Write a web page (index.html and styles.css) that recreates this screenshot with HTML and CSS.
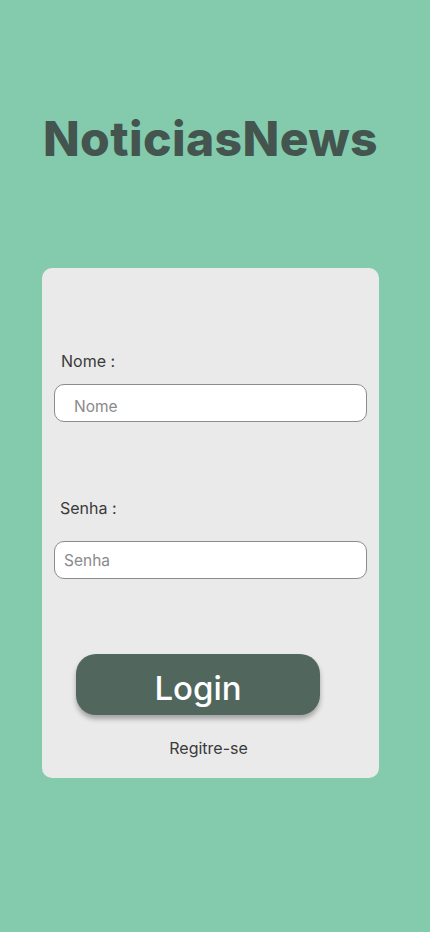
FILE: index.html
```html
<!DOCTYPE html>
<html lang="pt">
<head>
<meta charset="utf-8">
<link rel="stylesheet" href="styles.css">
</head>
<body>
<main class="page">
  <h1 class="title">NoticiasNews</h1>
  <form class="card">
    <label class="label label-nome">Nome :</label>
    <input class="field field-nome" type="text" placeholder="Nome">
    <label class="label label-senha">Senha :</label>
    <input class="field field-senha" type="password" placeholder="Senha">
    <button type="button" class="btn">Login</button>
    <a class="register">Regitre-se</a>
  </form>
</main>
</body>
</html>
```
FILE: styles.css
```css
* { box-sizing: border-box; }
html, body { margin: 0; padding: 0; }
body {
  background: #84cbad;
  font-family: Inter, "Noto Sans", sans-serif;
  width: 430px;
  height: 932px;
  overflow: hidden;
}
.page {
  display: flex;
  flex-direction: column;
  padding: 0 51px 0 42px;
}
.title {
  margin: 109px 0 0 0;
  font-family: Inter, sans-serif;
  font-weight: 800;
  font-size: 48px;
  line-height: 60px;
  letter-spacing: 0.4px;
  color: #43554e;
  text-align: center;
  white-space: nowrap;
}
.card {
  margin-top: 99px;
  width: 337px;
  height: 510px;
  background: #eaeaea;
  border-radius: 10px;
  display: flex;
  flex-direction: column;
  padding: 82px 12px 0 12px;
}
.label {
  font-size: 16px;
  line-height: 22px;
  color: #3a3a3a;
  padding-left: 7px;
}
.label-senha { margin-top: 75px; padding-left: 6px; }
.field {
  margin-top: 12px;
  height: 38px;
  width: 313px;
  border: 1px solid #8c8c8c;
  border-radius: 10px;
  background: #fff;
  font-family: Inter, sans-serif;
  font-size: 15.5px;
  color: #333;
  outline: none;
}
.field::placeholder { color: #8a8a8a; }
.field-nome { padding: 6px 0 0 19px; }
.field-senha { margin-top: 22px; padding: 0 0 0 9px; }
.btn {
  margin: 75px 0 0 22px;
  width: 244px;
  height: 61px;
  border: none;
  border-radius: 20px;
  background: #51665d;
  color: #fff;
  font-family: Inter, sans-serif;
  font-weight: 500;
  font-size: 33px;
  line-height: 61px;
  padding: 4px 0 0 0;
  box-shadow: 0 4px 5px rgba(0,0,0,0.3);
  cursor: pointer;
}
.register {
  margin-top: 22px;
  text-align: center;
  font-size: 16px;
  line-height: 22px;
  color: #3a3a3a;
  padding-right: 4px;
}
```
